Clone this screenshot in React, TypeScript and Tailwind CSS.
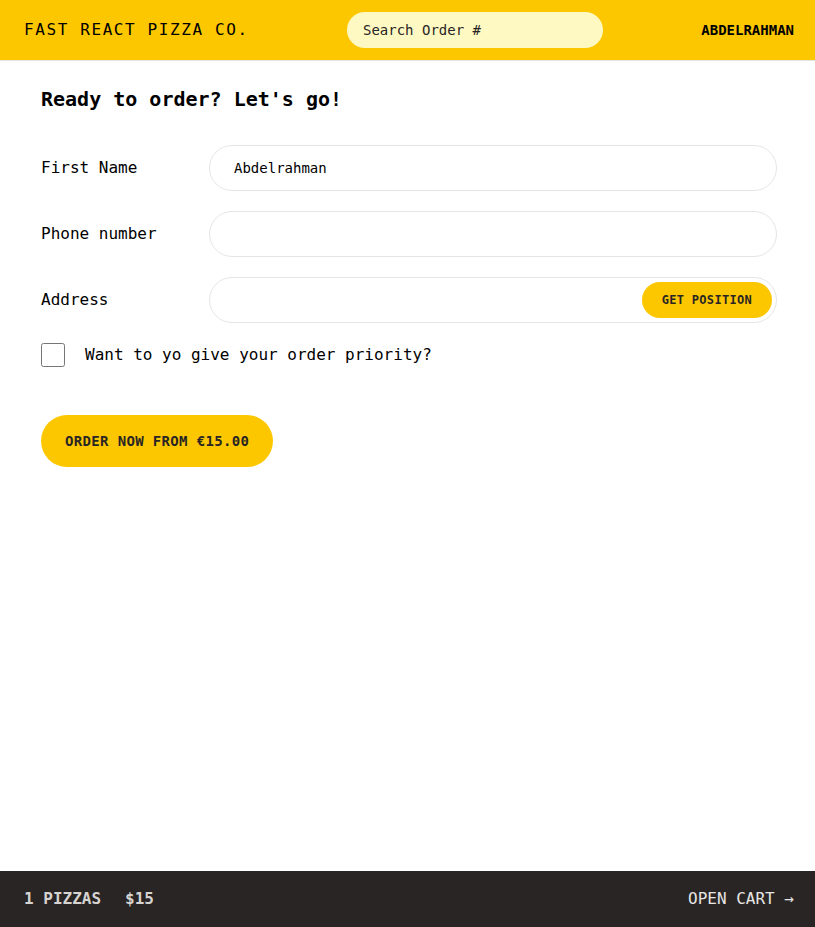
import React from 'react';

const font = "font-['DejaVu_Sans_Mono',monospace]";

function Header() {
  return (
    <header className="flex items-center justify-between border-b border-stone-200 bg-yellow-400 px-6 py-3 uppercase">
      <span className="tracking-widest">Fast React Pizza Co.</span>
      <input
        placeholder="Search Order #"
        className="w-64 rounded-full bg-yellow-100 px-4 py-2 text-sm placeholder:text-stone-800 focus:outline-none"
      />
      <div className="text-sm font-semibold">Abdelrahman</div>
    </header>
  );
}

const inputCls =
  'w-full grow rounded-full border border-stone-200 px-6 py-3 text-sm focus:outline-none';

function CreateOrder() {
  return (
    <div className="px-4 py-6">
      <h2 className="mb-8 text-xl font-semibold">Ready to order? Let's go!</h2>
      <form>
        <div className="mb-5 flex items-center gap-2">
          <label className="basis-40 shrink-0">First Name</label>
          <input className={inputCls} type="text" defaultValue="Abdelrahman" />
        </div>
        <div className="mb-5 flex items-center gap-2">
          <label className="basis-40 shrink-0">Phone number</label>
          <input className={inputCls} type="tel" />
        </div>
        <div className="relative mb-5 flex items-center gap-2">
          <label className="basis-40 shrink-0">Address</label>
          <input className={inputCls} type="text" />
          <span className="absolute right-[5px] top-[5px]">
            <button
              type="button"
              className="rounded-full bg-yellow-400 px-5 py-2.5 text-xs font-semibold uppercase tracking-wide text-stone-800"
            >
              Get position
            </button>
          </span>
        </div>
        <div className="mb-12 flex items-center gap-5">
          <input type="checkbox" className="h-6 w-6 accent-yellow-400" />
          <label className="font-medium">Want to yo give your order priority?</label>
        </div>
        <button
          type="button"
          className="rounded-full bg-yellow-400 px-6 py-4 text-sm font-semibold uppercase tracking-wide text-stone-800"
        >
          Order now from €15.00
        </button>
      </form>
    </div>
  );
}

function CartOverview() {
  return (
    <div className="flex items-center justify-between bg-stone-800 px-6 py-4 text-base uppercase text-stone-200">
      <p className="space-x-6 font-semibold text-stone-300">
        <span>1 pizzas</span>
        <span>$15</span>
      </p>
      <a href="#">Open cart &rarr;</a>
    </div>
  );
}

export default function App() {
  return (
    <div className={`h-screen overflow-hidden text-black ${font}`}>
      <div className="grid h-full w-[818px] grid-rows-[auto_1fr_auto]">
        <Header />
        <div className="overflow-auto">
          <main className="mx-auto max-w-3xl">
            <CreateOrder />
          </main>
        </div>
        <CartOverview />
      </div>
    </div>
  );
}
